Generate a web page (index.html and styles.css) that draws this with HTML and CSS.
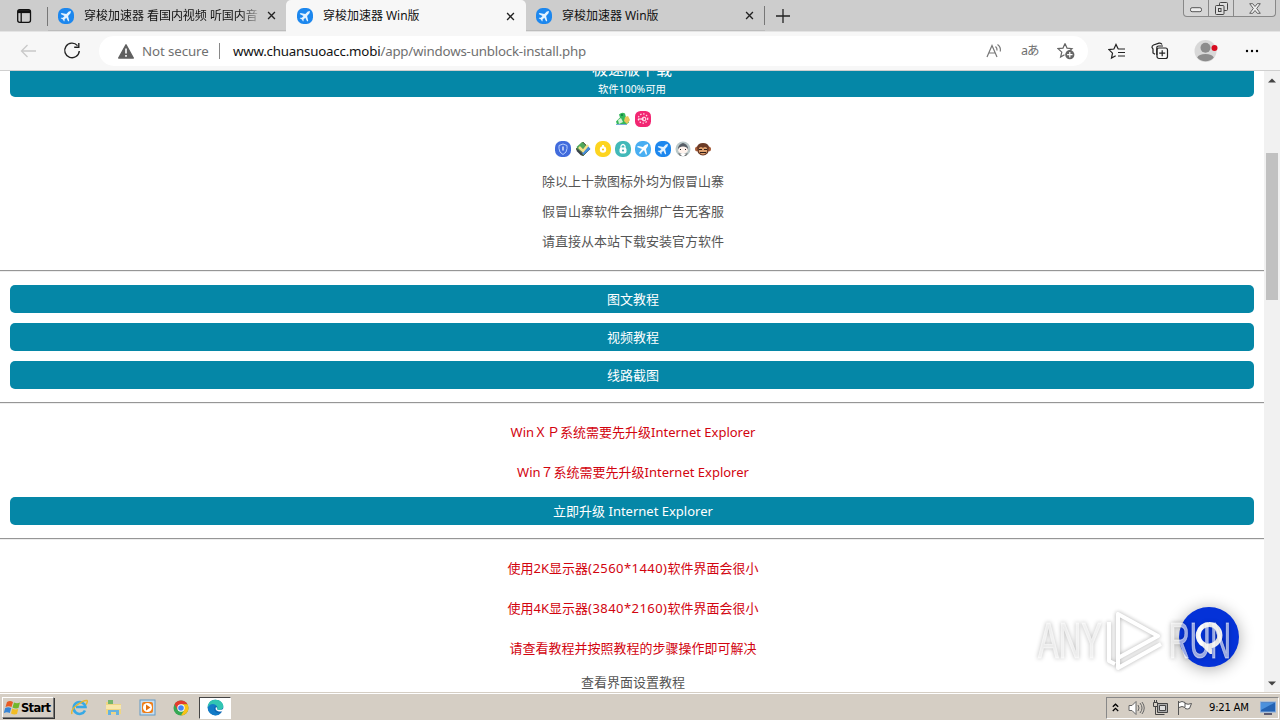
FILE: index.html
```html
<!DOCTYPE html>
<html lang="zh-CN">
<head>
<meta charset="utf-8">
<title>穿梭加速器 Win版</title>
<link rel="stylesheet" href="styles.css">
</head>
<body>
<svg width="0" height="0" class="defs">
  <defs>
    <symbol id="plane" viewBox="0 0 16 16"><rect width="16" height="16" rx="6.5" fill="#1c87ee"/><path d="M13 3 10.8 3.6 8.3 6.1 3.5 5 2.7 6l3.8 2-1.6 1.8-1.7-.1-.5.6 2.2 1.1 1.1 2.1.6-.5-.1-1.6L8.3 9.7l1.9 3.8 1-.8L10.1 8l2.4-2.7z" fill="#e4f3ff"/></symbol>
    <symbol id="close" viewBox="0 0 10 10"><path d="M1.2 1.2l7.6 7.6M8.8 1.2 1.2 8.8" stroke="#222" stroke-width="1.5"/></symbol>
  </defs>
</svg>
<div class="screen">
  <header class="tabs">
    <div class="tab-menu"><svg width="16" height="16" viewBox="0 0 16 16" fill="none" stroke="#111" stroke-width="1.3"><rect x="1.7" y="1.7" width="12.8" height="12.6" rx="2"/><path d="M2 3.6h12.4" stroke-width="3"/><path d="M5.2 4v10"/></svg></div>
    <div class="tab tab-first"><svg class="fav"><use href="#plane"/></svg><span class="tab-title fade">穿梭加速器 看国内视频 听国内音</span><svg class="x"><use href="#close"/></svg></div>
    <div class="tab active"><svg class="fav"><use href="#plane"/></svg><span class="tab-title">穿梭加速器 Win版</span><svg class="x"><use href="#close"/></svg></div>
    <div class="tab"><svg class="fav"><use href="#plane"/></svg><span class="tab-title">穿梭加速器 Win版</span><svg class="x"><use href="#close"/></svg></div>
    <div class="new-tab"><svg width="14" height="14" viewBox="0 0 14 14"><path d="M7 0v14M0 7h14" stroke="#222" stroke-width="1.3"/></svg></div>
    <div class="win-buttons">
      <span class="wb min"><svg width="12" height="6" viewBox="0 0 12 6"><rect x=".5" y=".7" width="11" height="4" rx="1.6" fill="#eee" stroke="#555"/></svg></span>
      <span class="wb res"><svg width="13" height="13" viewBox="0 0 13 13" fill="#ddd" stroke="#444"><rect x="4.5" y=".5" width="8" height="8" rx="1"/><rect x=".5" y="3.500" width="8.500" height="9" rx="1"/><rect x="3.500" y="6.500" width="2.500" height="3"/></svg></span>
      <span class="wb cls"><svg width="12" height="11" viewBox="0 0 12 11"><path d="M.7.7h3L6 3.500 8.300.7h3L7.700 5.500l3.600 4.800h-3L6 7.500l-2.300 2.800h-3l3.600-4.800z" fill="#eee" stroke="#555" stroke-width=".9"/></svg></span>
    </div>
  </header>

  <nav class="toolbar">
    <svg class="back" width="17" height="14" viewBox="0 0 17 14" fill="none" stroke="#c9c9c9" stroke-width="1.3"><path d="M16 7H1.500M7.500 1l-6 6 6 6"/></svg>
    <svg class="reload" width="18" height="18" viewBox="0 0 18 18" fill="none" stroke="#222" stroke-width="1.4"><path d="M14.500 3.600A7.300 7.300 0 1 0 16.300 9M15.800 1v4.200h-4.600"/></svg>
    <div class="address">
      <svg class="warn" width="16" height="15" viewBox="0 0 16 15"><path d="M8 .8 15.300 14H.7z" fill="#606060" stroke="#606060" stroke-width="1.400" stroke-linejoin="round"/><path d="M8 4.500v5M8 11v1.800" stroke="#fff" stroke-width="1.600"/></svg>
      <span class="insecure">Not secure</span>
      <span class="bar"></span>
      <span class="url"><b>www.chuansuoacc.mobi</b>/app/windows-unblock-install.php</span>
      <svg class="read" width="17" height="16" viewBox="0 0 17 16" fill="none" stroke="#777" stroke-width="1.2"><path d="M1 14 6 2.500 11 14M2.800 10h6.500M9.500 3.500q1.800 1.500 1.500 4M11.500 1.500q3.600 2.500 2.800 7"/></svg>
      <span class="translate">aあ</span>
      <svg class="star" width="18" height="18" viewBox="0 0 18 18"><path d="m8 1.500 2 4.600 5 .5-3.800 3.400M8 1.500 6 6.100l-5 .5 3.800 3.500-1.200 5L7.500 12.700" fill="none" stroke="#666" stroke-width="1.200"/><circle cx="12.800" cy="12.700" r="4.600" fill="#666"/><path d="M12.800 10v5.400m-2.700-2.700h5.400" stroke="#fff" stroke-width="1.200"/></svg>
    </div>
    <svg class="favs" width="18" height="17" viewBox="0 0 18 17" fill="none" stroke="#222" stroke-width="1.200"><path d="M10.200 6 8 1.500 5.900 6l-5 .6 3.600 3.500-1 5 4.200-2.300M10 6h7M10 9.500h7M10 13h7"/></svg>
    <svg class="collections" width="18" height="18" viewBox="0 0 18 18" fill="none" stroke="#222" stroke-width="1.200"><path d="M4 12.200 2 11V7L1 5.500Q.8 3.600 2.500 3L8 1.200q2-.5 3 1.300M5.800 13V6q0-2 2-2H12"/><rect x="6" y="6" width="10.500" height="10.500" rx="2"/><path d="M11.200 8.200v6m-3-3h6"/></svg>
    <svg class="avatar" width="24" height="24" viewBox="0 0 24 24"><circle cx="11.500" cy="12" r="11" fill="#d8d8d8"/><circle cx="11.500" cy="8.700" r="5" fill="#8c8c8c"/><path d="M3.200 18.500q1.500-3.500 8.300-3.500t8.300 3.500A11 11 0 0 1 3.200 18.500" fill="#8c8c8c"/><circle cx="20.500" cy="9" r="3" fill="#d80c20"/></svg>
    <svg class="dots" width="14" height="4" viewBox="0 0 14 4"><circle cx="2" cy="2" r="1.200"/><circle cx="7" cy="2" r="1.200"/><circle cx="12" cy="2" r="1.200"/></svg>
  </nav>

  <main class="viewport">
    <section class="page">
      <div class="download"><strong>极速版下载</strong><small>软件100%可用</small></div>
      <div class="icons top">
        <svg viewBox="0 0 16 16"><path d="M4 3.500q3-3 6-1l1 4 3 5-3 2H2l-1-3 4-4z" fill="#35b85a"/><path d="M10 6l3-1 2 4-3 4-3-3z" fill="#e8c75a"/><path d="M3 9l3-2 2 4-4 2z" fill="#d4f3d5"/><circle cx="7" cy="4" r="1" fill="#174"/><path d="M1 13.500h11" stroke="#76a9d8"/></svg>
        <svg viewBox="0 0 16 16"><rect width="16" height="16" rx="5.500" fill="#f22672"/><circle cx="8" cy="7.500" r="4.700" fill="none" stroke="#ffd4e3" stroke-width="1.300" stroke-dasharray="1.500 1.600"/><path d="M3 8h6" stroke="#fff"/><circle cx="9" cy="8" r="1.900" fill="none" stroke="#fff"/></svg>
      </div>
      <div class="icons">
        <svg viewBox="0 0 16 16"><rect width="16" height="16" rx="6.500" fill="#416bdc"/><path d="m8 3 4 1.500v3q0 4-4 6-4-2-4-6v-3z" fill="none" stroke="#b6ceff"/><path d="M8 5.500v4" stroke="#fff" stroke-width="1.200"/></svg>
        <svg viewBox="0 0 16 16"><path d="m8 1 7 7-7 7-7-7z" fill="#59714f" stroke="#59714f" stroke-linejoin="round"/><path d="m1.500 6 5.500-5 4 4-6 5z" fill="#4fa85a"/><path d="m7 12 6-7 2.500 3-7 6z" fill="#438bdc"/><path d="m4 6 4 4 5-6" fill="none" stroke="#f4e28a" stroke-width="2.500"/><path d="m2 9 5 5" stroke="#39424a" stroke-width="2"/></svg>
        <svg viewBox="0 0 16 16"><rect width="16" height="16" rx="7" fill="#fdd420"/><circle cx="8" cy="8.500" r="3.200" fill="#fff"/><path d="M8 4v4" stroke="#fff" stroke-width="2"/><circle cx="8" cy="8.500" r="1" fill="#f4c300"/></svg>
        <svg viewBox="0 0 16 16"><rect width="16" height="16" rx="7" fill="#42b9b9"/><rect x="4.500" y="6.500" width="7" height="6" rx="2" fill="#fff"/><path d="M6 7V5q2-3 4 0v2" fill="none" stroke="#fff" stroke-width="1.300"/><circle cx="8" cy="9.500" r="1" fill="#329da4"/></svg>
        <svg viewBox="0 0 16 16"><rect width="16" height="16" rx="7" fill="#48aef2"/><path d="m13 3-3 1-2 2-5-1-1 1 5 2-3 4 1 1 4-4 2 5 1-1-1-5 2-3z" fill="#fff"/></svg>
        <svg viewBox="0 0 16 16"><use href="#plane"/></svg>
        <svg viewBox="0 0 16 16"><circle cx="8" cy="8" r="7.500" fill="#bac8c9"/><path d="M3 7q1-4 5-5 4 1 5 5v2H3z" fill="#565d65"/><ellipse cx="8" cy="9" rx="5" ry="3.500" fill="#fff3ed"/><path d="M5.500 8v1m5-1v1" stroke="#222"/><path d="M3 12q5 2 10 0l-2 3H5z" fill="#777"/><path d="m5 13 3-1 3 1-2 2H7z" fill="#fff"/></svg>
        <svg viewBox="0 0 16 16"><circle cx="2.500" cy="8" r="2.500" fill="#a65c39"/><circle cx="13.500" cy="8" r="2.500" fill="#a65c39"/><path d="M2 6q1-4 6-4t6 4l-1 6q-5 5-10 0z" fill="#6b3b27"/><path d="M4 7q2-2 4 0 2-2 4 0v4q-4 5-8 0z" fill="#dda06e"/><path d="M4 8.500h3m2 0h3m-7 3h6" stroke="#301d18"/></svg>
      </div>
      <div class="notes"><p>除以上十款图标外均为假冒山寨</p><p>假冒山寨软件会捆绑广告无客服</p><p>请直接从本站下载安装官方软件</p></div>
      <hr>
      <div class="button-list"><a class="btn">图文教程</a><a class="btn">视频教程</a><a class="btn">线路截图</a></div>
      <hr>
      <div class="alerts"><p>WinＸＰ系统需要先升级Internet Explorer</p><p>Win７系统需要先升级Internet Explorer</p></div>
      <a class="btn upgrade">立即升级 Internet Explorer</a>
      <hr>
      <div class="alerts"><p class="res-note">使用2K显示器<span>(2560*1440)</span>软件界面会很小</p><p class="res-note">使用4K显示器<span>(3840*2160)</span>软件界面会很小</p><p>请查看教程并按照教程的步骤操作即可解决</p></div>
      <p class="guide">查看界面设置教程</p>
    </section>
    <aside class="scroll">
      <svg width="8" height="5" viewBox="0 0 8 5"><path d="M0 4.500 4 .5l4 4z" fill="#444"/></svg>
      <i class="thumb"></i>
      <svg width="8" height="5" viewBox="0 0 8 5"><path d="M0 .5h8l-4 4z" fill="#444"/></svg>
    </aside>
    <div class="chat"><svg width="30" height="34" viewBox="0 0 30 34"><path d="M15 4.500a10.800 10.800 0 0 0-4.500 20.600L15.500 30v-4.100A10.700 10.700 0 0 0 15 4.500" fill="none" stroke="#fff" stroke-width="5"/></svg></div>
    <svg class="watermark" width="204" height="70" viewBox="0 0 204 70">
      <g class="mark-text"><text x="4" y="53" textLength="64" lengthAdjust="spacingAndGlyphs">ANY</text><text x="135" y="53" textLength="62" lengthAdjust="spacingAndGlyphs">RUN</text></g>
      <g class="mark-line" fill="none" stroke-linejoin="round"><path d="M84 9v44l40-22z"/><path d="M75 17v39l6 3M84 48v15l43-24"/></g>
    </svg>
  </main>

  <footer class="taskbar">
    <div class="start"><svg width="17" height="16" viewBox="0 0 17 16"><path d="m3 2q3-2 6 0L7.500 7q-3-1.500-6 0z" fill="#e85b24"/><path d="m10 2.500q3 1.500 6 0L14.500 8q-3 1-6-.5z" fill="#72b72c"/><path d="m1.200 8q3-1.500 6 0L5.800 13q-3-1.500-6 0z" fill="#3785d6"/><path d="m8.200 8.500q3 1.500 6 .5L13 14q-3 1-6-.5z" fill="#f3bd24"/></svg><span>Start</span></div>
    <div class="task"><svg width="17" height="17" viewBox="0 0 17 17"><path d="M14 11.500A6 6 0 1 1 14.500 8H5" fill="none" stroke="#38a9e5" stroke-width="2.500"/><path d="M1 15Q-.5 11 6 6T16 1.500q1 1-1 4" fill="none" stroke="#e9b72c" stroke-width="1.400"/></svg></div>
    <div class="task"><svg width="17" height="17" viewBox="0 0 17 17"><path d="M1 3h6l1 2h8v10H1z" fill="#efd583"/><path d="M3 1h5v4H3z" fill="#75b66b"/><path d="M1 6h15v4H1z" fill="#f7e7ac"/><path d="M3 16v-5h11v5h-3v-3H6v3z" fill="#66b2df"/></svg></div>
    <div class="task"><svg width="17" height="17" viewBox="0 0 17 17"><rect x="1" y="1" width="15" height="15" fill="#c8def0" stroke="#639ac5"/><rect x="3" y="3" width="11" height="11" rx="2" fill="#ef7f1a"/><circle cx="8.500" cy="8.500" r="4.500" fill="#fff"/><path d="m7 5.500 4.500 3L7 11.500z" fill="#e3700f"/></svg></div>
    <div class="task"><svg width="16" height="16" viewBox="0 0 16 16"><circle cx="8" cy="8" r="7.500" fill="#35a853"/><path d="M1.500 4.300A7.500 7.500 0 0 1 14.500 4.300H8L4.700 10z" fill="#e33b2e"/><path d="M14.500 4.300A7.500 7.500 0 0 1 8 15.500l3.400-5.800L8 4.300z" fill="#fbc116"/><circle cx="8" cy="8" r="3.700" fill="#fff"/><circle cx="8" cy="8" r="2.800" fill="#4285f4"/></svg></div>
    <div class="task current"><svg width="17" height="17" viewBox="0 0 17 17"><circle cx="8.500" cy="8.500" r="7.800" fill="#0d68b5"/><path d="M.7 8.500C1 3 4 .7 8.500.7c5 0 8 3.500 7.800 6.800-.2 2.700-2.800 4-5.500 3.200-1.700-.5 0-1.200-.6-3Q8 4 .7 8.500" fill="#31c5b2"/><path d="M.7 8.500C3 4 8 4 9.500 7q-2.500 0-2.500 3 .5 4 6.500 4.500A7.800 7.800 0 0 1 .7 8.500" fill="#127bc7"/><path d="M9 8q-1.500 3 2 4.300 3 .8 5-.6l.5-2q-3 2-5.800 1-1.500-.5-.5-1.700z" fill="#fff"/></svg></div>
    <div class="tray">
      <svg class="chev" width="7" height="9" viewBox="0 0 7 9" fill="none" stroke="#000" stroke-width="1.300"><path d="m.8 3.800 2.700-2.600 2.700 2.600M.8 8l2.700-2.600L6.200 8"/></svg>
      <svg width="17" height="16" viewBox="0 0 17 16" fill="#fff" stroke="#666"><path d="M1 5.500h3l4-4v13l-4-4H1z"/><path d="M10 5q2 3 0 6m2-8q4 5 0 10m2-11q4.500 6 0 12" fill="none"/></svg>
      <svg width="17" height="16" viewBox="0 0 17 16" stroke="#444"><path d="M5.500 3.500h10v9h-10z" fill="#aaa"/><path d="M7.500 5.500h6v5h-6z" fill="#ddd"/><path d="M1.500 2.500h4v4h-4zM3.500 6v8.500h9M2.500 0v3m2-3v3" fill="none"/></svg>
      <svg width="17" height="16" viewBox="0 0 17 16" fill="#fff" stroke="#555"><path d="M2.500 1v14M3 2.500q3-2 6 0v5q-3-2-6 0m6-4q3 1.500 6.500 0l-2 5q-2 1-4.500 0"/></svg>
      <time>9:21 AM</time>
      <svg width="16" height="14" viewBox="0 0 16 14"><rect x=".5" y="1" width="15" height="10" fill="#2463b3" stroke="#86aee0"/><path d="M1 2h13L1 9z" fill="#4c91dc"/><path d="M4 13h8" stroke="#335" stroke-width="1.500"/></svg>
    </div>
  </footer>
</div>
</body>
</html>
```
FILE: styles.css
```css
* { box-sizing: border-box; }
body { margin: 0; font-family: "Noto Sans", "Noto Sans CJK SC", sans-serif; font-size: 13px; }
p { margin: 0; }
svg { display: block; flex: none; }
.defs { position: absolute; }
.screen { width: 1280px; height: 720px; overflow: hidden; display: flex; flex-direction: column; }

.tabs { height: 32px; flex: none; display: flex; background: #cdcdcd; border-bottom: 1px solid #e4e4e4; }
.tab-menu { width: 48px; height: 31px; padding: 8px 0 0 16px; }
.tab { width: 239px; height: 31px; display: flex; align-items: center; padding: 1px 11px 0 10px; border-bottom: 1px solid #bcbcbc; }
.tab-first { width: 238px; padding-right: 10px; position: relative; }
.tab-first::before { content: ""; position: absolute; left: -1px; top: 7px; width: 1px; height: 19px; background: #777; }
.tab.active { width: 240px; height: 32px; background: #f7f7f7; border-radius: 5px 5px 0 0; border: 0; padding: 0 11px; }
.fav { width: 16px; height: 16px; }
.tab-title { flex: 1; margin-left: 10px; font-size: 12px; line-height: 20px; white-space: nowrap; color: #111; letter-spacing: -.03px; }
.fade { -webkit-mask-image: linear-gradient(90deg, #000 90%, transparent 103%); mask-image: linear-gradient(90deg, #000 90%, transparent 103%); }
.x { width: 9px; height: 9px; margin-left: 9px; }
.new-tab { width: 32px; height: 19px; margin: 6px 0 0 -1px; padding: 3px 0 0 11px; border-left: 1px solid #777; }
.win-buttons { width: 93px; height: 17px; margin: 0 4px 0 auto; display: flex; border: 1px solid #888; border-top: 0; border-radius: 0 0 4px 4px; background: #d5d5d5; }
.wb { display: flex; align-items: center; justify-content: center; }
.min { width: 25px; padding-top: 4px; border-right: 1px solid #888; }
.res { width: 25px; border-right: 1px solid #888; }
.cls { flex: 1; }

.toolbar { height: 39px; flex: none; display: flex; align-items: center; background: #f7f7f7; border-bottom: 1px solid #cfcfcf; }
.back { margin-left: 20px; }
.reload { margin-left: 26px; }
.address { width: 989px; height: 30px; margin-left: 18px; padding-left: 19px; display: flex; align-items: center; border-radius: 15px; background: #fff; color: #707070; }
.insecure { width: 67px; margin-left: 8px; font-size: 13.300px; letter-spacing: -.1px; white-space: nowrap; }
.bar { width: 1px; height: 16px; margin-left: 10px; background: #888; }
.url { margin-left: 13px; font-size: 13.300px; letter-spacing: -.2px; white-space: nowrap; }
.url b { font-weight: 400; color: #111; }
.read { margin-left: auto; }
.translate { margin-left: 18px; width: 18px; font-size: 12.500px; letter-spacing: -1px; white-space: nowrap; line-height: 18px; }
.star { margin-left: 18px; margin-right: 13px; }
.favs { margin-left: 20px; }
.collections { margin-left: 25px; }
.avatar { margin-left: 25px; }
.dots { margin-left: 27px; }

.viewport { height: 621px; flex: none; position: relative; display: flex; background: #fff; overflow: hidden; }
.page { width: 1264px; height: 621px; overflow: hidden; text-align: center; color: #555; }
.download { height: 26px; margin: 0 10px; border-radius: 0 0 5px 5px; background: #0587a7; color: #fff; overflow: hidden; display: flex; flex-direction: column; align-items: center; }
.download strong { font-size: 16px; font-weight: 400; line-height: 20px; margin-top: -12px; }
.download small { font-size: 10.400px; line-height: 20px; white-space: nowrap; }
.icons { height: 30px; display: flex; justify-content: center; align-items: center; gap: 4px; padding-left: 1px; }
.icons.top { margin-top: 7px; padding-left: 2px; }
.icons svg { width: 16px; height: 16px; }
.notes { margin: 2px 0 14px; padding-left: 2px; }
.notes p, .guide { height: 30px; line-height: 30px; }
.guide { margin-top: -1px; padding-left: 2px; }
hr { height: 2px; margin: 0; border: 0; background: #eee; border-top: 1px solid #969696; }
.button-list { display: flex; flex-direction: column; gap: 10px; padding: 13px 0; }
.btn { display: block; height: 28px; margin: 0 10px; padding-left: 2px; line-height: 28px; border-radius: 5px; background: #0587a7; color: #fff; }
.alerts { padding: 8px 0 0 2px; color: #d2040f; }
.alerts p { height: 40px; line-height: 40px; }
.res-note span { letter-spacing: .45px; }
.upgrade { margin: 5px 10px 13px; }
.scroll { width: 16px; display: flex; flex-direction: column; align-items: center; padding: 7px 0 6px; background: #f1f1f1; }
.thumb { width: 12px; height: 147px; margin: 70px 0 auto; background: #c1c1c1; }
.chat { position: absolute; left: 1179px; top: 536px; width: 60px; height: 60px; border-radius: 50%; background: #0432d8; box-shadow: 0 2px 16px #0005; display: flex; align-items: center; justify-content: center; }
.watermark { position: absolute; left: 1034px; top: 534px; overflow: visible; }
.mark-text { font: 50px "Liberation Sans Narrow", "Liberation Sans", sans-serif; fill: #fff; fill-opacity: .6; stroke: #fff; stroke-opacity: .5; filter: drop-shadow(0 0 2px #0006); }
.mark-line { stroke: #fff; stroke-width: 4; filter: drop-shadow(0 0 2px #0006); opacity: .8; }

.taskbar { height: 29px; flex: none; display: flex; align-items: center; padding: 1px 1px 0 2px; background: #d5cec4; border-top: 1px solid #d5cec4; box-shadow: inset 0 1px #fff; }
.start { width: 52px; height: 21px; display: flex; align-items: center; padding-left: 1px; margin-right: 9px; border: 1px solid; border-color: #fff #777 #777 #fff; box-shadow: 1px 1px #333; font: bold 11.500px "DejaVu Sans", sans-serif; letter-spacing: -.700px; }
.task { width: 32px; height: 22px; margin-right: 2px; display: flex; align-items: center; justify-content: center; }
.task.current { background: #fff; border: 1px solid; border-color: #444 #fff #fff #444; }
.tray { width: 173px; height: 22px; margin-left: auto; display: flex; align-items: center; gap: 7px; padding-left: 5px; border: 1px solid; border-color: #888 #fff #fff #888; }
.tray .chev { margin-right: 2px; }
.tray time { width: 42px; margin-left: 9px; margin-right: 2px; font: 11.200px "DejaVu Sans Condensed", sans-serif; letter-spacing: -.250px; white-space: nowrap; }
```
